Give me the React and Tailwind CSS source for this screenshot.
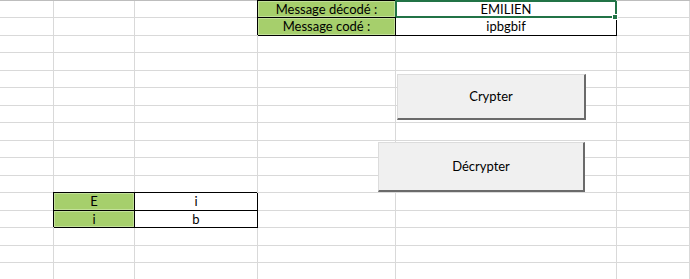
import React from 'react';

// Feuille Excel : grille + cellules remplies + deux boutons de formulaire
const ROWS = 16;
const COLS = 6;

const cells = {
    '0-3': { text: 'Message décodé :', kind: 'green' },
    '1-3': { text: 'Message codé :', kind: 'green' },
    '0-4': { text: 'EMILIEN', kind: 'active' },
    '1-4': { text: 'ipbgbif', kind: 'boxed' },
    '11-1': { text: 'E', kind: 'green' },
    '12-1': { text: 'i', kind: 'green' },
    '11-2': { text: 'i', kind: 'boxed' },
    '12-2': { text: 'b', kind: 'boxed' },
};

const Cell = ({ cell }) => {
    if (!cell) {
        return <div className="border-r border-b border-[#d9d9d9]" />;
    }

    if (cell.kind === 'green') {
        return (
            <div className="flex items-center justify-center border-r border-b border-black bg-[#a6cf6c] shadow-[-1px_-1px_0_0_#000,inset_0_0_0_1px_#c3e09a] text-black leading-none">
                {cell.text}
            </div>
        );
    }

    if (cell.kind === 'active') {
        return (
            <div className="relative flex items-center justify-center border-r border-b border-[#217346] bg-white shadow-[-1px_-1px_0_0_#217346,inset_0_0_0_1px_#217346] text-black leading-none">
                {cell.text}
                {/* poignée de recopie */}
                <span className="absolute -right-[2px] -bottom-[3px] w-[6px] h-[6px] bg-[#217346] border border-white" />
            </div>
        );
    }

    return (
        <div className="flex items-center justify-center border-r border-b border-black bg-white shadow-[-1px_-1px_0_0_#000] text-black leading-none">
            {cell.text}
        </div>
    );
};

const App = () => {
    const rows = Array.from({ length: ROWS }, (_, r) => r);
    const cols = Array.from({ length: COLS }, (_, c) => c);

    return (
        <div className="relative w-[690px] h-[279px] overflow-hidden bg-white font-['Lato',Arial,sans-serif] text-[13px] text-black">
            <div className="border-t border-[#bdbdbd]">
                <div className="grid grid-cols-[54px_81px_123px_138px_221px_1fr] grid-rows-[17px_18px_17px_18px_17px_18px_17px_18px_17px_18px_17px_18px_17px_18px_17px_18px]">
                    {rows.map((r) =>
                        cols.map((c) => <Cell key={`${r}-${c}`} cell={cells[`${r}-${c}`]} />)
                    )}
                </div>
            </div>

            {/* Boutons (contrôles flottants au-dessus de la feuille) */}
            <button className="absolute left-[397px] top-[74px] w-[189px] h-[46px] flex items-center justify-center bg-[#f0f0f0] border-t border-l border-[#dcdcdc] border-r-2 border-b-2 border-r-[#6a6a6a] border-b-[#6a6a6a] text-black text-[13px]">
                Crypter
            </button>
            <button className="absolute left-[378px] top-[142px] w-[207px] h-[50px] flex items-center justify-center bg-[#f0f0f0] border-t border-l border-[#dcdcdc] border-r-2 border-b-2 border-r-[#6a6a6a] border-b-[#6a6a6a] text-black text-[13px]">
                Décrypter
            </button>
        </div>
    );
};

export default App;
